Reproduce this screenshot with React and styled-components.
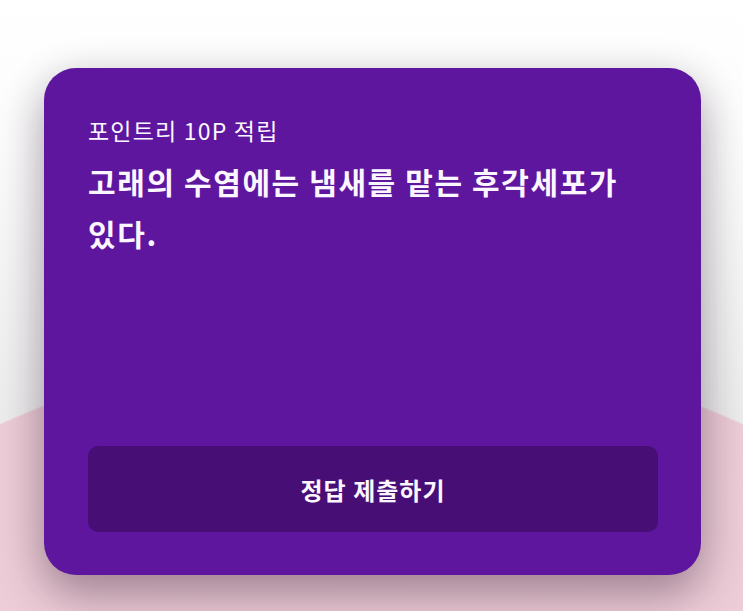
import styled, { createGlobalStyle } from "styled-components";

const GlobalStyle = createGlobalStyle`
  html, body {
    margin: 0;
    padding: 0;
  }
  body {
    font-family: "Noto Sans CJK KR", "Noto Sans", sans-serif;
  }
`;

const Page = styled.div`
  min-height: 611px;
  box-sizing: border-box;
  padding: 68px 42px 0 44px;
  background:
    radial-gradient(circle 900px at 50% 1243px, #efd1db 0, #ecccd6 898px, rgba(236, 204, 214, 0) 900px),
    linear-gradient(180deg, #ffffff 0, #fbfbfb 150px, #ececec 420px);
`;

const Card = styled.div`
  height: 507px;
  box-sizing: border-box;
  background: #5e169f;
  border-radius: 32px;
  padding: 46px 43px 43px 44px;
  display: flex;
  flex-direction: column;
  box-shadow: 0 22px 46px rgba(40, 10, 40, 0.32), 0 4px 40px rgba(0, 0, 0, 0.1);
  color: #fbf6ff;
`;

const Label = styled.div`
  font-size: 23px;
  font-weight: 400;
  line-height: 32px;
  letter-spacing: 1.2px;
`;

const Question = styled.h2`
  margin: 9px 0 0;
  font-size: 30px;
  font-weight: 700;
  line-height: 52px;
  letter-spacing: 1.6px;
  word-break: keep-all;
`;

const SubmitButton = styled.button`
  margin-top: auto;
  height: 86px;
  border: none;
  border-radius: 10px;
  background: #470f76;
  color: #fbf6ff;
  font-family: inherit;
  font-size: 24px;
  font-weight: 600;
  letter-spacing: 1px;
  cursor: pointer;
`;

const App = () => {
  return (
    <Page>
      <GlobalStyle />
      <Card>
        <Label>포인트리 10P 적립</Label>
        <Question>고래의 수염에는 냄새를 맡는 후각세포가 있다.</Question>
        <SubmitButton>정답 제출하기</SubmitButton>
      </Card>
    </Page>
  );
};

export default App;
